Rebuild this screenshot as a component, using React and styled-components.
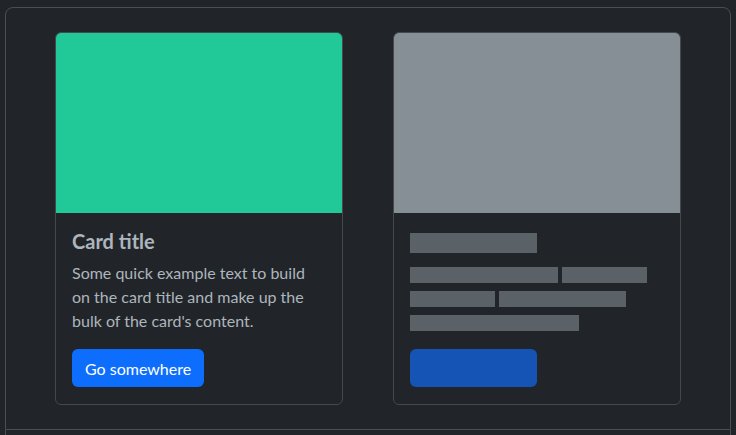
import React from 'react';
import styled, { createGlobalStyle } from 'styled-components';

const GlobalStyle = createGlobalStyle`
  html, body {
    margin: 0;
    background: #212529;
    font-family: "Lato", "Liberation Sans", sans-serif;
    color: #adb5bd;
  }
  * { box-sizing: border-box; }
`;

const Page = styled.div`
  padding: 7px 5px 0;
  height: 435px;
  display: flex;
  flex-direction: column;
  overflow: hidden;
`;

const Example = styled.div`
  border: 1px solid #4b4f53;
  border-radius: 8px 8px 0 0;
  padding: 24px 0;
  display: flex;
  justify-content: center;
  gap: 50px;
`;

const Below = styled.div`
  flex: 1;
  border-left: 1px solid #4b4f53;
  border-right: 1px solid #4b4f53;
`;

const Card = styled.div`
  width: 288px;
  border: 1px solid #45494d;
  border-radius: 6px;
  overflow: hidden;
  background: #212529;
`;

const CardImage = styled.div`
  height: 180px;
  background: ${(p) => p.$color};
`;

const CardBody = styled.div`
  padding: 16px 16px 17px;
`;

const Title = styled.h5`
  margin: 0 0 8px;
  font-size: 20px;
  font-weight: 700;
  line-height: 24px;
  height: 24px;
  display: flex;
  align-items: ${(p) => (p.$placeholder ? 'flex-end' : 'center')};
  color: #adb5bd;
`;

const Text = styled.p`
  margin: 0 0 16px;
  font-size: 16px;
  line-height: 24px;
`;

const Button = styled.a`
  display: inline-flex;
  align-items: center;
  justify-content: center;
  height: 38px;
  padding: 0 13px;
  border-radius: 6px;
  background: #0d6efd;
  color: #fff;
  font-size: 16px;
  text-decoration: none;
`;

const Lines = styled.div`
  display: flex;
  flex-wrap: wrap;
  column-gap: 4px;
  row-gap: 8px;
  padding: 6px 0 2px;
  margin-bottom: 16px;
`;

const Placeholder = styled.span`
  display: block;
  width: ${(p) => (p.$cols / 12) * 100}%;
  height: ${(p) => p.$h || 16}px;
  background: #5b6267;
`;

const PlaceholderButton = styled.span`
  display: block;
  width: 50%;
  height: 38px;
  border-radius: 6px;
  background: #1554b4;
`;

export default function App() {
  return (
    <>
      <GlobalStyle />
      <Page>
        <Example>
          <Card>
            <CardImage $color="#20c997" />
            <CardBody>
              <Title>Card title</Title>
              <Text>
                Some quick example text to build on the card title and make up the bulk of the
                card's content.
              </Text>
              <Button href="#">Go somewhere</Button>
            </CardBody>
          </Card>
          <Card>
            <CardImage $color="#868e96" />
            <CardBody>
              <Title $placeholder>
                <Placeholder $cols={6} $h={20} />
              </Title>
              <Lines>
                <Placeholder $cols={7} />
                <Placeholder $cols={4} />
                <Placeholder $cols={4} />
                <Placeholder $cols={6} />
                <Placeholder $cols={8} />
              </Lines>
              <PlaceholderButton />
            </CardBody>
          </Card>
        </Example>
        <Below />
      </Page>
    </>
  );
}
